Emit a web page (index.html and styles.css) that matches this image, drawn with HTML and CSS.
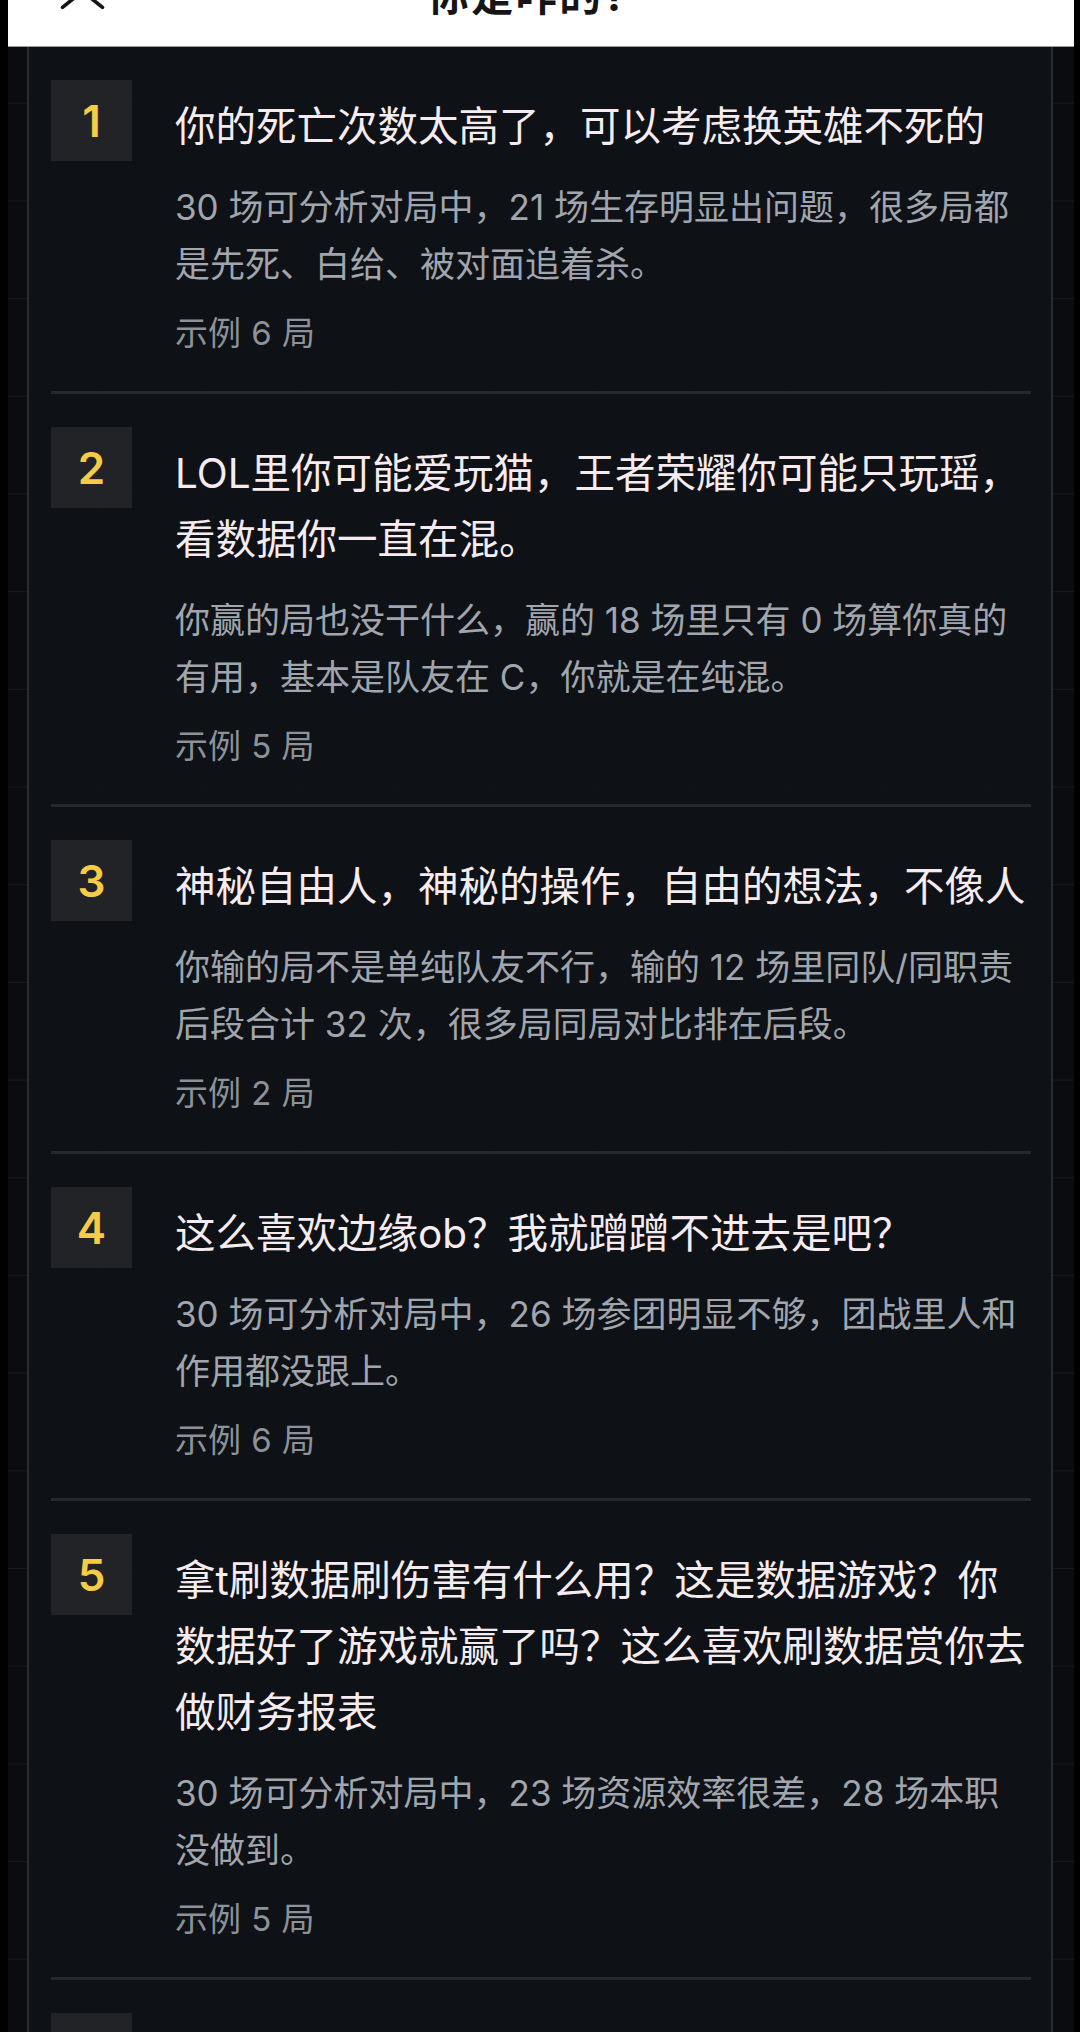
FILE: index.html
```html
<!DOCTYPE html>
<html lang="zh-CN">
<head>
    <meta charset="UTF-8">
    <meta name="viewport" content="width=device-width, initial-scale=1.0">
    <title>问题诊断</title>
    <link rel="stylesheet" href="styles.css">
</head>
<body>

<div class="screen">
    <!-- 顶部标题栏 -->
    <header class="sheet-head">
        <div class="head-left">
            <svg class="close-icon" width="60" height="20" viewBox="0 0 60 20">
                <path d="M10.5 -24.5 L50.5 7.3 M50.5 -24.5 L10.5 7.3" stroke="#141414" stroke-width="3.6" stroke-linecap="round" fill="none"/>
            </svg>
        </div>
        <h1 class="sheet-title">你是咋的?</h1>
        <div class="head-right"></div>
    </header>

    <!-- 问题列表 -->
    <main class="board">
        <section class="panel">
            <article class="item">
                <div class="rank">1</div>
                <div class="item-body">
                    <h2 class="item-title">你的死亡次数太高了，可以考虑换英雄不死的</h2>
                    <p class="item-desc">30 场可分析对局中，21 场生存明显出问题，很多局都是先死、白给、被对面追着杀。</p>
                    <p class="item-meta">示例 6 局</p>
                </div>
            </article>

            <article class="item">
                <div class="rank">2</div>
                <div class="item-body">
                    <h2 class="item-title">LOL里你可能爱玩猫，王者荣耀你可能只玩瑶，看数据你一直在混。</h2>
                    <p class="item-desc">你赢的局也没干什么，赢的 18 场里只有 0 场算你真的有用，基本是队友在 C，你就是在纯混。</p>
                    <p class="item-meta">示例 5 局</p>
                </div>
            </article>

            <article class="item">
                <div class="rank">3</div>
                <div class="item-body">
                    <h2 class="item-title">神秘自由人，神秘的操作，自由的想法，不像人</h2>
                    <p class="item-desc">你输的局不是单纯队友不行，输的 12 场里同队/同职责后段合计 32 次，很多局同局对比排在后段。</p>
                    <p class="item-meta">示例 2 局</p>
                </div>
            </article>

            <article class="item">
                <div class="rank">4</div>
                <div class="item-body">
                    <h2 class="item-title">这么喜欢边缘ob？我就蹭蹭不进去是吧？</h2>
                    <p class="item-desc">30 场可分析对局中，26 场参团明显不够，团战里人和作用都没跟上。</p>
                    <p class="item-meta">示例 6 局</p>
                </div>
            </article>

            <article class="item">
                <div class="rank">5</div>
                <div class="item-body">
                    <h2 class="item-title">拿t刷数据刷伤害有什么用？这是数据游戏？你数据好了游戏就赢了吗？这么喜欢刷数据赏你去做财务报表</h2>
                    <p class="item-desc">30 场可分析对局中，23 场资源效率很差，28 场本职没做到。</p>
                    <p class="item-meta">示例 5 局</p>
                </div>
            </article>

            <article class="item">
                <div class="rank">6</div>
                <div class="item-body">
                    <h2 class="item-title">视野做得太少了，地图上全是黑的</h2>
                    <p class="item-desc">30 场可分析对局中，19 场视野得分偏低，经常被对面绕后。</p>
                    <p class="item-meta">示例 4 局</p>
                </div>
            </article>
        </section>
    </main>
</div>

</body>
</html>
```

FILE: styles.css
```css
html, body {
    margin: 0;
    padding: 0;
    background-color: #000;
}
body {
    font-family: "Inter", "Noto Sans CJK SC", sans-serif;
    overflow: hidden;
}
.screen {
    margin: 0 6px 0 8px;
    min-height: 2032px;
    /* 背景网格 */
    background-color: #0b0c0f;
    background-image:
        linear-gradient(to right, #17191d 1px, transparent 1px),
        linear-gradient(to bottom, #17191d 1px, transparent 1px);
    background-size: 98px 97.7px;
    background-position: -3px 5px;
}

/* 顶部标题栏 */
.sheet-head {
    display: grid;
    grid-template-columns: 1fr auto 1fr;
    align-items: start;
    height: 46px;
    background-color: #fff;
    border-bottom: 1px solid #9a9a9a;
    overflow: hidden;
}
.head-left {
    padding-left: 44px;
}
.close-icon {
    display: block;
}
.sheet-title {
    margin: -25px 26px 0 0;
    font-size: 42px;
    line-height: 42px;
    font-weight: 700;
    color: #151515;
    letter-spacing: 2px;
}

/* 列表面板 */
.board {
    padding: 0 21px 0 19px;
}
.panel {
    background-color: rgba(15, 18, 23, 0.88);
    border-left: 2px solid #2a2c30;
    border-right: 2px solid #2a2c30;
    padding: 0 20px 0 22px;
    min-height: 1985px;
}
.item {
    display: flex;
    gap: 43px;
    padding: 33px 0 38px;
    border-bottom: 3px solid #25282d;
}
.rank {
    flex: 0 0 81px;
    height: 81px;
    background-color: #222327;
    display: flex;
    align-items: center;
    justify-content: center;
    font-family: "Inter", sans-serif;
    font-size: 44px;
    font-weight: 600;
    color: #f6cb45;
}
.item-body {
    flex: 1;
    min-width: 0;
    padding: 14px 4px 0 0;
}
.item-title {
    margin: 0;
    font-size: 40.5px;
    line-height: 66px;
    font-weight: 400;
    color: #f6ecef;
}
.item-desc {
    margin: 19px 0 0;
    font-size: 35px;
    line-height: 57px;
    color: #a0a5ae;
}
.item-meta {
    margin: 20px 0 0;
    font-size: 33px;
    line-height: 40px;
    color: #8d9299;
    word-spacing: 1px;
}
```
